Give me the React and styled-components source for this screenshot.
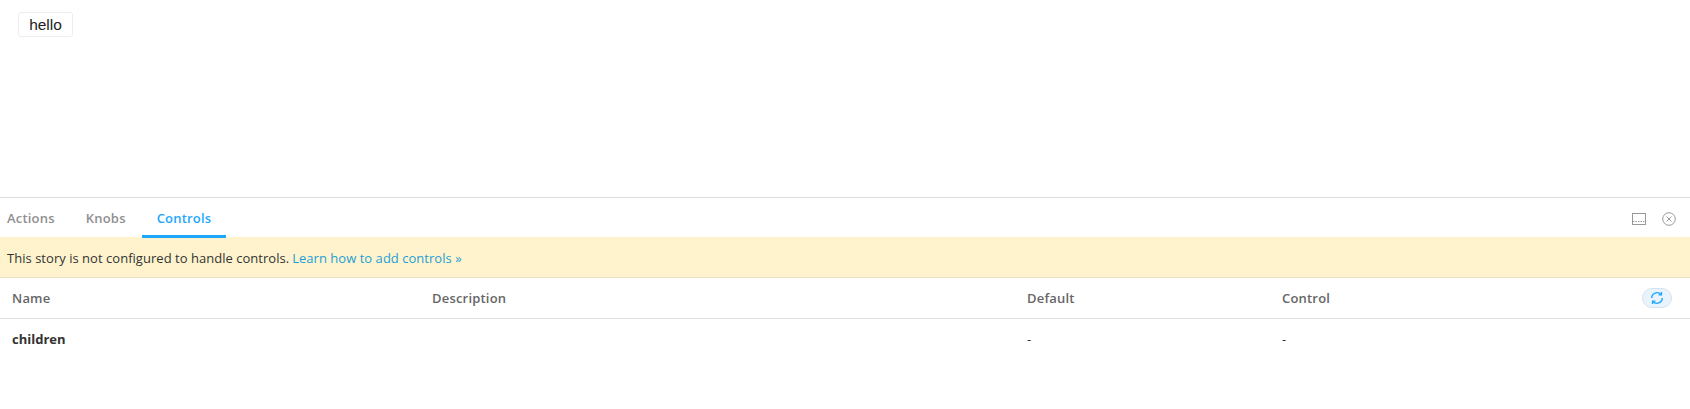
import React from 'react';
import styled, { createGlobalStyle } from 'styled-components';

const Global = createGlobalStyle`
  html, body { margin: 0; padding: 0; background: #fff; }
  body { font-family: "Open Sans", "Noto Sans", sans-serif; overflow: hidden; }
`;
const Page = styled.div`width: 1690px; height: 409px; display: flex; flex-direction: column;`;
const Preview = styled.div`height: 197px; padding: 12px 18px; box-sizing: border-box;`;
const HelloButton = styled.button`
  display: block; width: 55px; height: 25px; padding: 0; box-sizing: border-box;
  background: #fff; border: 1px solid #eee; border-radius: 3px;
  font: 15.5px "Liberation Sans", Arial, sans-serif; color: #222;
`;
const Panel = styled.div`flex: 1; border-top: 1px solid #dcdcdc; display: flex; flex-direction: column;`;
const TabBar = styled.div`height: 39px; display: flex; align-items: flex-start; justify-content: space-between;`;
const Tabs = styled.div`display: flex;`;
const Tab = styled.div`
  position: relative; z-index: 1; height: 40px;
  box-sizing: border-box; padding: 3px 15px 0; margin-right: 1px; display: flex; align-items: center;
  font-size: 13px; font-weight: 600; letter-spacing: 0.2px;
  color: ${p => (p.$active ? '#1ea7fd' : '#8f8f8f')};
  border-bottom: 3px solid ${p => (p.$active ? '#1ea7fd' : 'transparent')};
  &:first-child { padding-left: 7px; }
`;
const Tools = styled.div`display: flex; align-items: center; gap: 16px; height: 41px; padding-right: 14px; color: #999;`;
const Notice = styled.div`
  height: 41px; box-sizing: border-box; background: #fef3cd; border-bottom: 1px solid #eadfc0;
  display: flex; align-items: center; padding: 1px 0 0 7px; font-size: 13px; letter-spacing: 0.03px; color: #333;
`;
const NoticeLink = styled.a`color: #1ea0d5; margin-left: 3px;`;
const Row = styled.div`
  display: grid; grid-template-columns: 420px 595px 255px 1fr; height: 40px; align-items: center;
  padding-left: 12px; padding-right: 18px; font-size: 13px;
`;
const HeadRow = styled(Row)`border-bottom: 1px solid #e3e3e3; font-weight: 600; letter-spacing: 0.2px; color: #666;`;
const BodyRow = styled(Row)`color: #333;`;
const Strong = styled.span`font-weight: 700;`;
const ControlCell = styled.div`display: flex; justify-content: space-between; align-items: center;`;
const Reset = styled.div`
  width: 30px; height: 20px; box-sizing: border-box; border-radius: 10px; background: #e8f3fb;
  border: 1px solid #d5e3ee; display: flex; align-items: center; justify-content: center; color: #1ea7fd;
`;

export default function App() {
  return (
    <Page>
      <Global />
      <Preview><HelloButton>hello</HelloButton></Preview>
      <Panel>
        <TabBar>
          <Tabs>
            <Tab>Actions</Tab>
            <Tab>Knobs</Tab>
            <Tab $active>Controls</Tab>
          </Tabs>
          <Tools>
            <svg width="14" height="12" viewBox="0 0 14 12" fill="none" stroke="currentColor"><rect x=".5" y=".5" width="13" height="11" /><path d="M1 8.5h12" strokeDasharray="1.5 1" /></svg>
            <svg width="14" height="14" viewBox="0 0 14 14" fill="none" stroke="currentColor"><circle cx="7" cy="7" r="6.3" /><path d="M4.5 4.5l5 5M9.5 4.5l-5 5" /></svg>
          </Tools>
        </TabBar>
        <Notice>This story is not configured to handle controls.<NoticeLink>Learn how to add controls »</NoticeLink></Notice>
        <HeadRow><div>Name</div><div>Description</div><div>Default</div><ControlCell>Control<Reset><svg width="14" height="14" viewBox="0 0 13 13" fill="none" stroke="currentColor" strokeWidth="1.3"><path d="M1.6 6.5a4.9 4.9 0 0 1 8.6-3.2M11.4 6.5a4.9 4.9 0 0 1-8.6 3.2" /><path d="M10.6 1v2.6H8M2.4 12V9.4H5" /></svg></Reset></ControlCell></HeadRow>
        <BodyRow><Strong>children</Strong><div /><div>-</div><div>-</div></BodyRow>
      </Panel>
    </Page>
  );
}
